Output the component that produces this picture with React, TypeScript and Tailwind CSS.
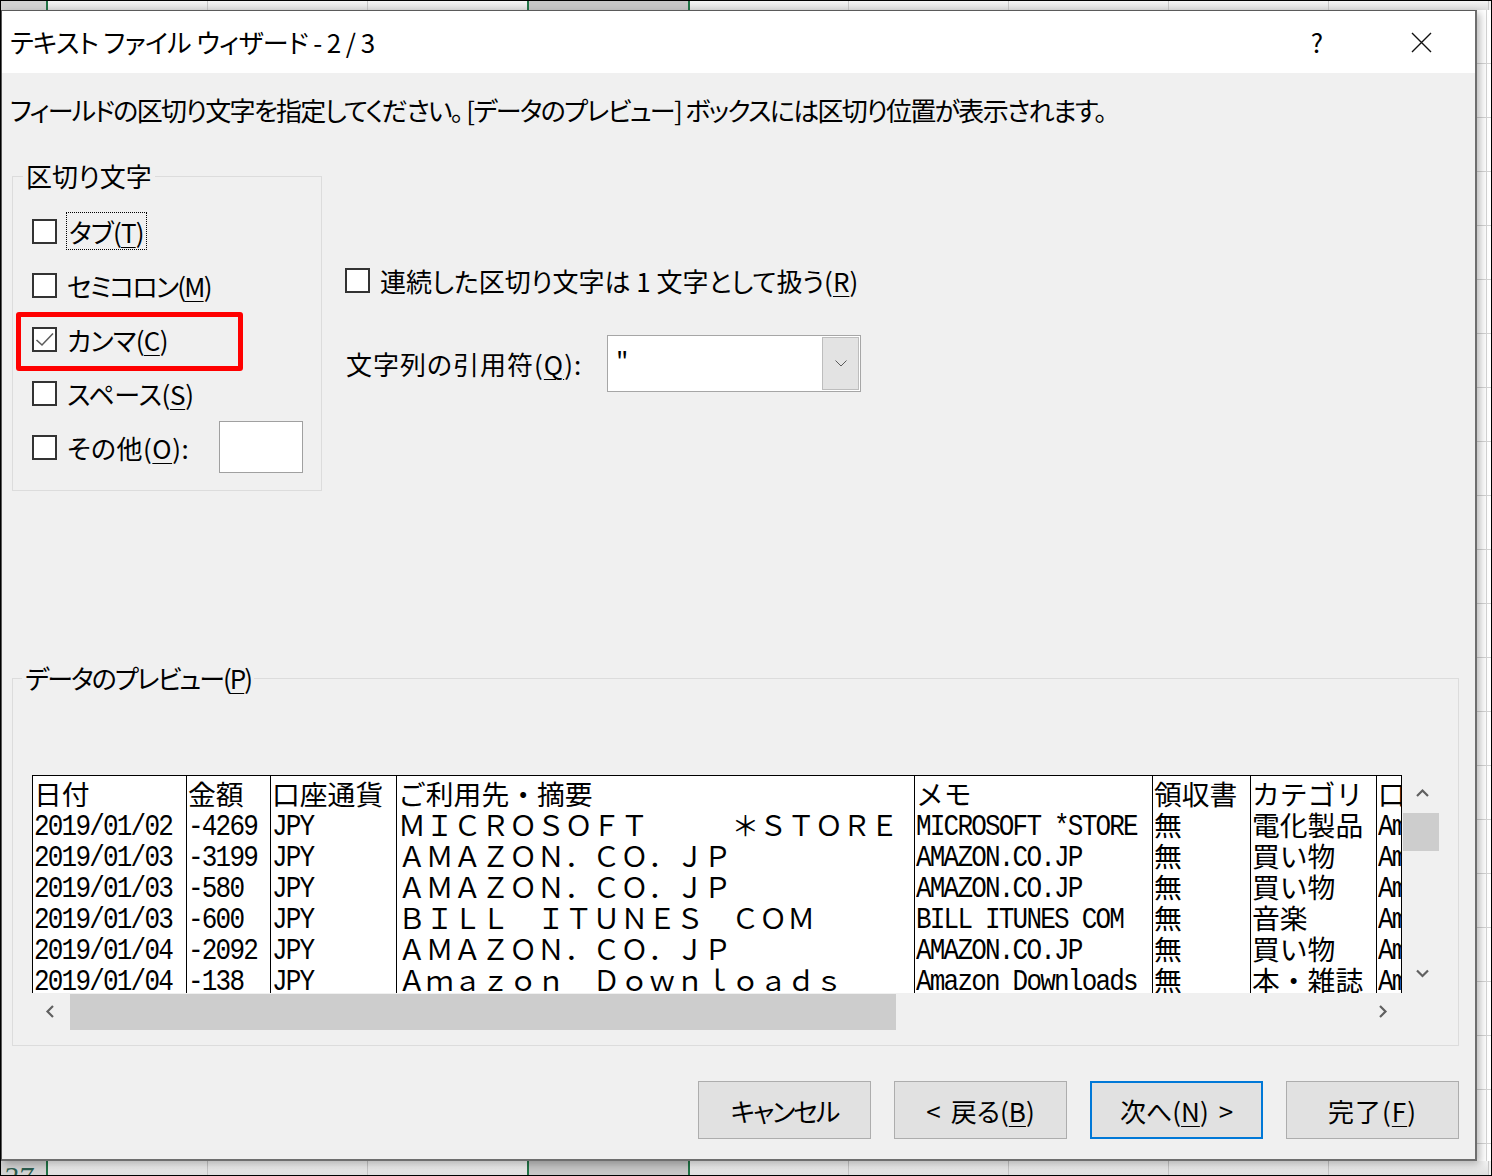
import React from "react";

const JP = "font-['Noto_Sans_CJK_JP',sans-serif] [font-feature-settings:normal] text-[27.8px] leading-[27px] pb-[4px]";
const MONO = "font-['Liberation_Mono','Noto_Sans_CJK_JP',monospace] [font-feature-settings:normal] text-[26px] leading-[33px] tracking-[-1.8px]";

interface Column {
  w: string;
  head: string;
  mono?: boolean;
  rows: string[];
}

const COLUMNS: Column[] = [
  { w: "w-[154px]", head: "日付", mono: true, rows: ["2019/01/02", "2019/01/03", "2019/01/03", "2019/01/03", "2019/01/04", "2019/01/04"] },
  { w: "w-[84px]", head: "金額", mono: true, rows: ["-4269", "-3199", "-580", "-600", "-2092", "-138"] },
  { w: "w-[126px]", head: "口座通貨", mono: true, rows: ["JPY", "JPY", "JPY", "JPY", "JPY", "JPY"] },
  {
    w: "w-[518px]",
    head: "ご利用先・摘要",
    rows: [
      "ＭＩＣＲＯＳＯＦＴ　　　＊ＳＴＯＲＥ",
      "ＡＭＡＺＯＮ．ＣＯ．ＪＰ",
      "ＡＭＡＺＯＮ．ＣＯ．ＪＰ",
      "ＢＩＬＬ　ＩＴＵＮＥＳ　ＣＯＭ",
      "ＡＭＡＺＯＮ．ＣＯ．ＪＰ",
      "Ａｍａｚｏｎ　Ｄｏｗｎｌｏａｄｓ",
    ],
  },
  { w: "w-[238px]", head: "メモ", mono: true, rows: ["MICROSOFT *STORE", "AMAZON.CO.JP", "AMAZON.CO.JP", "BILL ITUNES COM", "AMAZON.CO.JP", "Amazon Downloads"] },
  { w: "w-[98px]", head: "領収書", rows: ["無", "無", "無", "無", "無", "無"] },
  { w: "w-[126px]", head: "カテゴリ", rows: ["電化製品", "買い物", "買い物", "音楽", "買い物", "本・雑誌"] },
  { w: "w-[25px]", head: "口座名", mono: true, rows: ["Amex", "Amex", "Amex", "Amex", "Amex", "Amex"] },
];

const DELIMITERS = [
  { label: "タブ", key: "T", track: "" },
  { label: "セミコロン", key: "M", track: "tracking-[-1.8px]" },
  { label: "カンマ", key: "C", track: "tracking-[-0.6px]" },
  { label: "スペース", key: "S", track: "tracking-[-0.3px]" },
  { label: "その他", key: "O", track: "tracking-[0.5px]" },
];

// excel sheet behind the dialog
const STRIP_TOP = [
  "w-[45px] bg-[#d2d2d2]",
  "w-[2px] bg-[#217346]",
  "w-[159px] bg-gradient-to-b from-[#f4f4f4] to-[#dedede]",
  "w-[1px] bg-[#c6c6c6]",
  "w-[159px] bg-gradient-to-b from-[#f4f4f4] to-[#dedede]",
  "w-[1px] bg-[#c6c6c6]",
  "w-[159px] bg-gradient-to-b from-[#f4f4f4] to-[#dedede]",
  "w-[2px] bg-[#217346]",
  "w-[159px] bg-[#c6c6c6]",
  "w-[2px] bg-[#217346]",
  "w-[158px] bg-gradient-to-b from-[#f4f4f4] to-[#dedede]",
  "w-[1px] bg-[#c6c6c6]",
  "w-[159px] bg-gradient-to-b from-[#f4f4f4] to-[#dedede]",
  "w-[1px] bg-[#c6c6c6]",
  "w-[159px] bg-gradient-to-b from-[#f4f4f4] to-[#dedede]",
  "w-[1px] bg-[#c6c6c6]",
  "w-[159px] bg-gradient-to-b from-[#f4f4f4] to-[#dedede]",
  "w-[1px] bg-[#c6c6c6]",
  "w-[159px] bg-gradient-to-b from-[#f4f4f4] to-[#dedede]",
  "w-[1px] bg-[#c6c6c6]",
  "w-[2px] bg-[#f0f0f0]",
];

function Acc({ children }: { children: React.ReactNode }) {
  return <span className="underline decoration-1 underline-offset-[4px]">{children}</span>;
}

function CheckBox({ checked }: { checked?: boolean }) {
  return (
    <span className="flex h-[25px] w-[25px] shrink-0 items-center justify-center border-2 border-[#333333] bg-white">
      {checked && (
        <svg width="21" height="21" viewBox="0 0 21 21">
          <path d="M2.5 11 L8 16 L19 4.5" fill="none" stroke="#5c5c5c" strokeWidth="1.6" />
        </svg>
      )}
    </span>
  );
}

function Chevron({ dir }: { dir: "up" | "down" | "left" | "right" }) {
  const d = {
    up: "M1 8 L6.5 2.5 L12 8",
    down: "M1 2.5 L6.5 8 L12 2.5",
    left: "M8 1 L2.5 6.5 L8 12",
    right: "M3 1 L8.5 6.5 L3 12",
  }[dir];
  return (
    <svg width="13" height="13" viewBox="0 0 13 13">
      <path d={d} fill="none" stroke="#606060" strokeWidth="2.2" />
    </svg>
  );
}

function Strip({ bottom }: { bottom?: boolean }) {
  return (
    <div className={`flex shrink-0 overflow-hidden ${bottom ? "h-[14px]" : "h-[9px]"}`}>
      {STRIP_TOP.map((c, i) => (
        <div key={i} className={`h-full shrink-0 overflow-hidden ${c}`}>
          {bottom && i === 0 && (
            <span className="block pl-[2px] pt-[1px] font-['Liberation_Serif',serif] text-[30px] italic leading-none text-[#2c5e50]">27</span>
          )}
        </div>
      ))}
    </div>
  );
}

function RightStrip() {
  const cells = Array.from({ length: 22 }, (_, i) => i);
  return (
    <div className="flex w-[14px] shrink-0 overflow-hidden bg-white">
      <div className="flex w-[9px] flex-col">
        {cells.map((i) => (
          <div key={i} className="h-[54px] shrink-0 border-b border-[#d4d4d4]" />
        ))}
      </div>
      <div className="flex w-[5px] flex-col border-l border-[#d4d4d4]">
        {cells.map((i) => (
          <div key={i} className="h-[54px] shrink-0 border-b border-[#d4d4d4]" />
        ))}
      </div>
    </div>
  );
}

function Preview() {
  return (
    <div className="ml-[10px] mt-[79px] flex">
      <div className="flex flex-col">
        <div className="flex h-[218px] w-[1370px] overflow-hidden border-r border-t border-black bg-white text-black">
          {COLUMNS.map((col) => (
            <div key={col.head} className={`${col.w} shrink-0 overflow-hidden border-l border-black pt-[4px]`}>
              <div className={`h-[31px] whitespace-nowrap pl-[1px] ${JP}`}>{col.head}</div>
              {col.rows.map((r, i) => (
                <div key={i} className={`h-[31px] whitespace-nowrap pl-[1px] ${col.mono ? MONO : JP}`}>
                  {col.mono ? <span className="inline-block origin-center scale-y-[1.15]">{r}</span> : r}
                </div>
              ))}
            </div>
          ))}
        </div>
        {/* horizontal scrollbar */}
        <div className="flex h-[37px] w-[1370px]">
          <div className="flex w-[38px] items-center justify-center">
            <Chevron dir="left" />
          </div>
          <div className="mt-[1px] h-[36px] w-[826px] bg-[#cdcdcd]" />
          <div className="flex-1" />
          <div className="flex w-[38px] items-center justify-center">
            <Chevron dir="right" />
          </div>
        </div>
      </div>
      {/* vertical scrollbar */}
      <div className="flex h-[218px] w-[39px] flex-col">
        <div className="flex h-[38px] items-center justify-center pl-[2px]">
          <Chevron dir="up" />
        </div>
        <div className="ml-[1px] h-[38px] w-[36px] bg-[#cdcdcd]" />
        <div className="flex-1" />
        <div className="flex h-[38px] items-center justify-center pl-[2px]">
          <Chevron dir="down" />
        </div>
      </div>
    </div>
  );
}

function Dialog() {
  return (
    <div className="relative z-10 flex w-[1476px] shrink-0 flex-col border-b-2 border-l border-r-2 border-t border-b-[#6e6e6e] border-l-[#5a5a5a] border-r-[#6e6e6e] border-t-[#5a5a5a] font-['Noto_Sans_CJK_JP',sans-serif] text-black shadow-[3px_3px_8px_rgba(0,0,0,0.28)] [font-feature-settings:'palt']">
      {/* title bar */}
      <div className="flex h-[62px] shrink-0 items-center bg-white pl-[8px]">
        <span className="text-[26px] leading-none tracking-[-0.6px]">テキスト ファイル ウィザード - 2 / 3</span>
        <span className="ml-auto text-[26px] leading-none">?</span>
        <svg className="ml-[88px] mr-[43px]" width="21" height="21" viewBox="0 0 21 21">
          <path d="M1 1 L20 20 M20 1 L1 20" stroke="#111111" strokeWidth="1.4" />
        </svg>
      </div>

      {/* body */}
      <div className="flex flex-1 flex-col bg-[#f0f0f0] pl-[10px] pr-[16px] pt-[19px]">
        <p className="-ml-[2px] h-[36px] whitespace-nowrap text-[26px] leading-[36px] tracking-[-1.7px]">
          フィールドの区切り文字を指定してください。 [データのプレビュー] ボックスには区切り位置が表示されます。
        </p>

        <div className="mt-[30px] flex items-start">
          <fieldset className="w-[310px] shrink-0 border border-[#dcdcdc] pb-[16px] pl-[10px]">
            <legend className="px-[3px] text-[26px] leading-[36px]">区切り文字</legend>
            <div className="ml-[9px] mt-[10px] flex flex-col">
              {DELIMITERS.map((d, i) => (
                <div key={d.key} className="relative flex h-[54px] items-center">
                  <CheckBox checked={i === 2} />
                  {i === 0 ? (
                    <span className="ml-[9px] flex h-[38px] items-center border border-dotted border-black px-[2px] text-[26px] tracking-[-0.8px]">
                      {d.label}(<Acc>{d.key}</Acc>)
                    </span>
                  ) : (
                    <span className={`ml-[10px] text-[26px] ${d.track} ${i === 4 ? "w-[152px]" : ""}`}>
                      {d.label}(<Acc>{d.key}</Acc>){i === 4 && ":"}
                    </span>
                  )}
                  {i === 4 && <span className="h-[52px] w-[84px] border border-[#a0a0a0] bg-white" />}
                  {i === 2 && (
                    <span className="absolute -left-[16px] top-0 h-[59px] w-[227px] rounded-[3px] border-[5px] border-[#ff0000]" />
                  )}
                </div>
              ))}
            </div>
          </fieldset>

          <div className="ml-[23px] flex flex-col pt-[104px]">
            <div className="flex h-[36px] items-center">
              <CheckBox />
              <span className="ml-[10px] text-[26px]">
                連続した区切り文字は 1 文字として扱う(<Acc>R</Acc>)
              </span>
            </div>
            <div className="mt-[37px] flex items-center">
              <span className="w-[262px] pl-[1px] text-[26px] tracking-[1px]">
                文字列の引用符(<Acc>Q</Acc>):
              </span>
              <div className="flex h-[57px] w-[254px] border border-[#a6a6a6] bg-white">
                <span className="pl-[8px] pt-[6px] text-[26px] leading-[36px]">"</span>
                <div className="my-px ml-auto mr-px flex w-[37px] items-center justify-center border border-[#bdbdbd] bg-[#e3e3e3]">
                  <svg width="12" height="7" viewBox="0 0 12 7">
                    <path d="M0.5 0.5 L6 6 L11.5 0.5" fill="none" stroke="#5a5a5a" strokeWidth="1" />
                  </svg>
                </div>
              </div>
            </div>
          </div>
        </div>

        <fieldset className="mt-[169px] border border-[#dcdcdc] pb-[15px] pl-[9px]">
          <legend className="px-[3px] text-[26px] leading-[36px] tracking-[-2px]">
            データのプレビュー(<Acc>P</Acc>)
          </legend>
          <Preview />
        </fieldset>

        <div className="mt-[35px] flex justify-end gap-[23px]">
          <button className="flex h-[58px] w-[173px] items-center justify-center border border-[#adadad] bg-[#e1e1e1] text-[26px] tracking-[-2px]">
            キャンセル
          </button>
          <button className="flex h-[58px] w-[173px] items-center justify-center border border-[#adadad] bg-[#e1e1e1] text-[26px]">
            <span className="mr-[10px]">&lt;</span>戻る(<Acc>B</Acc>)
          </button>
          <button className="flex h-[58px] w-[173px] items-center justify-center border-2 border-[#0078d7] bg-[#e1e1e1] text-[26px]">
            次へ(<Acc>N</Acc>)<span className="ml-[10px]">&gt;</span>
          </button>
          <button className="flex h-[58px] w-[173px] items-center justify-center border border-[#adadad] bg-[#e1e1e1] text-[26px] tracking-[1px]">
            完了(<Acc>F</Acc>)
          </button>
        </div>
      </div>
    </div>
  );
}

export default function App() {
  return (
    <div className="flex h-[1176px] w-[1492px] flex-col overflow-hidden border border-black bg-white">
      <Strip />
      <div className="flex h-[1151px] shrink-0">
        <Dialog />
        <RightStrip />
      </div>
      <Strip bottom />
    </div>
  );
}
